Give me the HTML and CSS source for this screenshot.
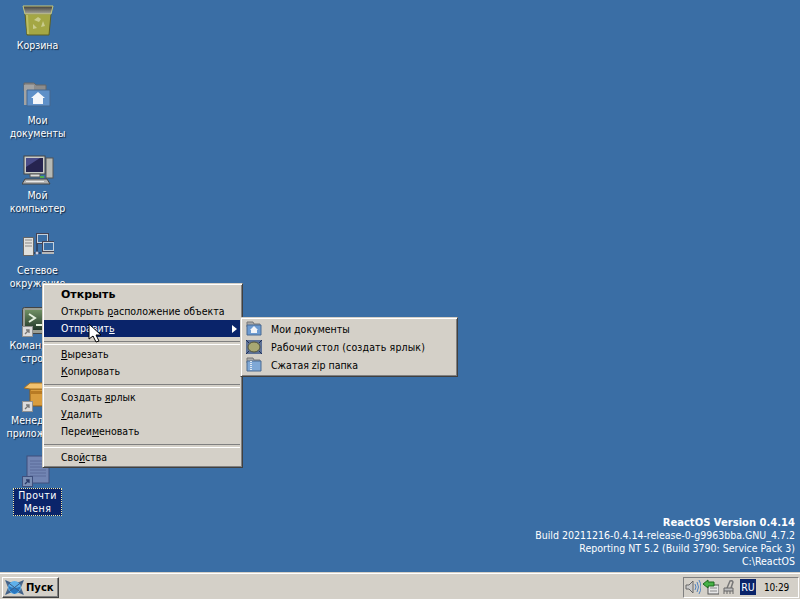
FILE: index.html
```html
<!DOCTYPE html>
<html lang="ru">
<head>
<meta charset="utf-8">
<title>ReactOS</title>
<link rel="stylesheet" href="styles.css">
</head>
<body>
<div class="screen">
  <main class="desktop">
    <div class="icons">
      <div class="dicon">
        <svg class="dicon-img" viewBox="0 0 32 32"><defs><linearGradient id="binTop" x1="0" y1="0" x2="0" y2="1"><stop offset="0" stop-color="#3d3d38"/><stop offset="1" stop-color="#a9a99c"/></linearGradient></defs><path d="M3 9h26l-2 21H5z" fill="#a4a744" stroke="#5d5f22"/><path d="M1 1h30l-2 8H3z" fill="url(#binTop)" stroke="#c6c87c"/><path d="M4 10h2l1 19H5z" fill="#bdbf66"/><path d="M12 15l4-3 3 2-2 3zM21 16l2 5-4 1zM11 19l4 4-4 1z" fill="#c9cb8c"/></svg>
        <span class="dlabel">Корзина</span>
      </div>
      <div class="dicon">
        <svg class="dicon-img" viewBox="0 0 32 32"><path d="M2 3h10l2 2h10v6H2z" fill="#8c8c8c" stroke="#666"/><path d="M2 5h10v20H2z" fill="#a3a3a3"/><path d="M5 10h23v16H5z" fill="#5f90c8" stroke="#44678f"/><path d="M16 12l7 6h-2v6h-10v-6H9z" fill="#f4f6fa"/></svg>
        <span class="dlabel">Мои документы</span>
      </div>
      <div class="dicon">
        <svg class="dicon-img" viewBox="0 0 32 32"><rect x="24" y="3" width="7" height="20" fill="#b5b9b5" stroke="#555"/><rect x="2" y="1" width="21" height="18" fill="#c7cbc7" stroke="#444"/><rect x="4" y="3" width="17" height="14" fill="#26244f"/><path d="M4 3h14L4 12z" fill="#4a4c88"/><rect x="8" y="19" width="10" height="3" fill="#dcdcdc" stroke="#555"/><rect x="18" y="21" width="4" height="2" fill="#4cae4c"/><path d="M3 24h22l3 5H0z" fill="#b0b0b0" stroke="#444"/><path d="M4 26h18v1H4z" fill="#e8e8e8"/></svg>
        <span class="dlabel">Мой компьютер</span>
      </div>
      <div class="dicon">
        <svg class="dicon-img" viewBox="0 0 32 32"><rect x="1.500" y="7.500" width="10" height="18" fill="#e0e0dc" stroke="#666"/><path d="M3 10h7M3 13h7M3 16h7" stroke="#888"/><path d="M12 23h4M15 14v9M15 23h4" stroke="#223" fill="none"/><circle cx="15" cy="23" r="1.500" fill="#ccd"/><rect x="14.500" y="3.500" width="12" height="10" fill="#c3d0dc" stroke="#445"/><rect x="16" y="5" width="9" height="7" fill="#3a6ea5"/><rect x="20.500" y="11.500" width="12" height="10" fill="#c3d0dc" stroke="#445"/><rect x="22" y="13" width="9" height="7" fill="#3a6ea5"/><rect x="20" y="22" width="13" height="2" fill="#b8b8b8"/></svg>
        <span class="dlabel">Сетевое окружение</span>
      </div>
      <div class="dicon">
        <svg class="dicon-img" viewBox="0 0 32 32"><defs><linearGradient id="con" x1="0" y1="0" x2="0" y2="1"><stop offset="0" stop-color="#6f8f63"/><stop offset="1" stop-color="#22382a"/></linearGradient></defs><rect x="0.500" y="2.500" width="31" height="26" rx="2" fill="#9a9e94" stroke="#444"/><rect x="3" y="5" width="26" height="20" fill="url(#con)"/><path d="M7 9l6 4-6 4" fill="none" stroke="#e6f2e0" stroke-width="2"/><path d="M14 20h9" stroke="#e6f2e0" stroke-width="2"/><rect x="0.500" y="21.500" width="10" height="10" fill="#dcdcdc" stroke="#909090"/><path d="M3 29l4-4M4 25h3v3" stroke="#777" stroke-width="1.300" fill="none"/></svg>
        <span class="dlabel">Командная строка</span>
      </div>
      <div class="dicon">
        <svg class="dicon-img" viewBox="0 0 32 32"><path d="M8 9h22v17H8z" fill="#d99d3e" stroke="#8a5a18"/><path d="M2 8l6-5h22l1 6H8z" fill="#f2c26f" stroke="#a8701f"/><path d="M8 11h22v3H8z" fill="#b87b24"/><rect x="0.500" y="21.500" width="10" height="10" fill="#dcdcdc" stroke="#909090"/><path d="M3 29l4-4M4 25h3v3" stroke="#777" stroke-width="1.300" fill="none"/></svg>
        <span class="dlabel">Менеджер приложений</span>
      </div>
      <div class="dicon selected">
        <svg class="dicon-img" viewBox="0 0 32 32"><rect x="5" y="1" width="22" height="27" fill="#7285b3" stroke="#3f4f7d"/><path d="M8 6h14M8 9h16M8 12h16M8 15h16M8 18h16M8 21h16" stroke="#5a6b99"/><rect x="0.500" y="21.500" width="10" height="10" fill="#7b8fb5" stroke="#3f4f7d"/><path d="M3 29l4-4M4 25h3v3" stroke="#2a3a68" stroke-width="1.300" fill="none"/></svg>
        <span class="dlabel">Прочти Меня</span>
      </div>
    </div>
    <div class="version">
      <strong>ReactOS Version 0.4.14</strong>
      <span>Build 20211216-0.4.14-release-0-g9963bba.GNU_4.7.2</span>
      <span>Reporting NT 5.2 (Build 3790: Service Pack 3)</span>
      <span>C:\ReactOS</span>
    </div>

    <div class="menu menu-main">
      <div class="item bold">Открыть</div>
      <div class="item">Открыть <u>р</u>асположение объекта</div>
      <div class="item active">Отправит<u>ь</u><i class="arrow"></i></div>
      <div class="sep"></div>
      <div class="item"><u>В</u>ырезать</div>
      <div class="item"><u>К</u>опировать</div>
      <div class="sep"></div>
      <div class="item">Создать <u>я</u>рлык</div>
      <div class="item"><u>У</u>далить</div>
      <div class="item">Переи<u>м</u>еновать</div>
      <div class="sep"></div>
      <div class="item">Сво<u>й</u>ства</div>
    </div>

    <div class="menu menu-sub">
      <div class="subitem">
        <svg class="micon" viewBox="0 0 16 16"><path d="M1 1h6l1 2h6v3H1z" fill="#aaa" stroke="#777"/><path d="M1 4h14v10H1z" fill="#6d9bd1" stroke="#4a6a92"/><path d="M8 5l4 4h-1v3H5V9H4z" fill="#f2f4f8"/></svg>
        <span>Мои документы</span>
      </div>
      <div class="subitem">
        <svg class="micon" viewBox="0 0 16 16"><rect x="0" y="1" width="16" height="14" fill="#5d7196"/><path d="M0 1l3 3M16 1l-3 3M0 15l3-3M16 15l-3-3" stroke="#1f2f55"/><ellipse cx="8" cy="8" rx="6" ry="5" fill="#a8a873" stroke="#55553a"/></svg>
        <span class="wide">Рабочий стол (создать ярлык)</span>
      </div>
      <div class="subitem">
        <svg class="micon" viewBox="0 0 16 16"><path d="M1 1h6l1 2h6v3H1z" fill="#aaa" stroke="#777"/><path d="M1 4h14v10H1z" fill="#7fa8d6" stroke="#4a6a92"/><path d="M5 4v10" stroke="#dfe8f2" stroke-width="2" stroke-dasharray="1 1"/></svg>
        <span>Сжатая zip папка</span>
      </div>
    </div>

    <svg class="cursor" viewBox="0 0 13 20"><path d="M1 1v15l4-3 3 6 3-1-3-6h5z" fill="#fff" stroke="#000"/></svg>
  </main>

  <footer class="taskbar">
    <button class="start">
      <svg class="start-logo" viewBox="0 0 19 15"><path d="M0 0l5 2h9l5-2-3 7.500 3 7.500-5-2H5l-5 2 3-7.500z" fill="#4d6a8c"/><circle cx="9.500" cy="7.500" r="6.500" fill="#5fb0ea"/><path d="M3.500 6q6 3.500 12 .5-1 5.500-6 7.500-5-2-6-8z" fill="#2a78c0"/><path d="M1 1l17 13M18 1L1 14" stroke="#3c5c85"/></svg>
      <span>Пуск</span>
    </button>
    <div class="tray">
      <svg class="ticon" viewBox="0 0 16 16"><path d="M1 6h3l4-4v12l-4-4H1z" fill="#c9c9c9" stroke="#666"/><path d="M10 5q2 3 0 6M12 3q3 5 0 10M14 1q4 7 0 14" fill="none" stroke="#4f82c0"/></svg>
      <svg class="ticon" viewBox="0 0 16 16"><rect x="5" y="6" width="11" height="9" fill="#e6e6e6" stroke="#555"/><path d="M7 9h7M7 12h7" stroke="#888"/><path d="M0 5l5-4v2h6v4H5v2z" fill="#47b247" stroke="#1d6b1d"/></svg>
      <svg class="ticon" viewBox="0 0 16 16"><path d="M6 9l3-7q2-1 3 1l-2 6" fill="none" stroke="#777" stroke-width="1.500"/><path d="M3 9h9v3H3z" fill="#c0c0c0" stroke="#666"/><path d="M3 12v3M6 12v3M9 12v3M12 12v3" stroke="#666"/></svg>
      <span class="lang">RU</span>
      <span class="clock">10:29</span>
    </div>
  </footer>
</div>
</body>
</html>
```
FILE: styles.css
```css
* { box-sizing: border-box; }
html, body { margin: 0; padding: 0; }
body {
  font-family: "DejaVu Sans Condensed", "DejaVu Sans", sans-serif;
  font-size: 10.5px;
  line-height: 13px;
  overflow: hidden;
}
.screen {
  width: 800px;
  height: 599px;
  display: flex;
  flex-direction: column;
  background: #3a6ea5;
}
.desktop {
  position: relative;
  flex: 1;
  display: flex;
  justify-content: space-between;
}
.icons { display: flex; flex-direction: column; width: 75px; }
.dicon {
  height: 75px;
  padding-top: 5px;
  display: flex;
  flex-direction: column;
  align-items: center;
}
.dicon-img { width: 32px; height: 32px; flex: none; }
.dlabel {
  margin-top: 1px;
  padding: 1px 2px;
  text-align: center;
  color: #fff;
  text-shadow: 1px 1px 1px #12233a;
  width: 66px;
}
.selected .dlabel {
  width: 49px;
  background: #0a246a;
  outline: 1px dotted #f0e8a0;
  outline-offset: -1px;
  text-shadow: none;
  padding: 1px 2px;
  letter-spacing: 0.4px;
}
.version {
  align-self: flex-end;
  display: flex;
  flex-direction: column;
  align-items: flex-end;
  padding: 0 5px 4px 0;
  color: #fff;
}
.version strong {
  font-family: "DejaVu Sans", sans-serif;
  font-size: 10px;
  font-weight: 700;
}

.menu {
  position: absolute;
  background: #d4d0c8;
  color: #000;
  border: 1px solid;
  border-color: #d4d0c8 #404040 #404040 #d4d0c8;
  box-shadow: inset 1px 1px #fff, inset -1px -1px #808080;
}
.menu-main {
  left: 42px;
  top: 283px;
  width: 201px;
  padding: 2px 2px 1px 1px;
}
.menu-sub {
  left: 240px;
  top: 317px;
  width: 218px;
  padding: 2px 3px 2px 3px;
}
.item {
  position: relative;
  height: 17px;
  line-height: 17px;
  padding-left: 17px;
}
.bold {
  font-family: "DejaVu Sans", sans-serif;
  font-size: 11px;
  font-weight: 700;
}
.active { background: #0a246a; color: #fff; }
.arrow {
  position: absolute;
  right: 3px;
  top: 5px;
  border-left: 5px solid #fff;
  border-top: 4px solid transparent;
  border-bottom: 4px solid transparent;
}
.sep {
  height: 9px;
  padding-top: 4px;
}
.sep::before {
  content: "";
  display: block;
  height: 2px;
  border-top: 1px solid #808080;
  border-bottom: 1px solid #fff;
}
.subitem {
  height: 18px;
  display: flex;
  align-items: center;
  gap: 9px;
  padding-left: 2px;
}
.wide { letter-spacing: 0.14px; }
.micon { width: 16px; height: 16px; flex: none; }
.cursor {
  position: absolute;
  left: 88px;
  top: 323px;
  width: 13px;
  height: 20px;
}
.taskbar {
  flex: none;
  height: 27px;
  display: flex;
  justify-content: space-between;
  align-items: center;
  padding: 2px 1px 0 2px;
  background: #d4d0c8;
  border-top: 1px solid #d4d0c8;
  box-shadow: inset 0 1px #fff;
}
.start {
  font: inherit;
  height: 21px;
  width: 57px;
  display: flex;
  align-items: center;
  gap: 2px;
  padding: 0 0 0 2px;
  background: #d4d0c8;
  color: #000;
  font-family: "DejaVu Sans", sans-serif;
  font-weight: 700;
  font-size: 10px;
  border: 1px solid;
  border-color: #fff #404040 #404040 #fff;
  box-shadow: inset -1px -1px #808080;
}
.start-logo { width: 19px; height: 15px; flex: none; }
.tray {
  height: 21px;
  width: 116px;
  display: flex;
  align-items: center;
  gap: 2px;
  padding-left: 1px;
  border: 1px solid;
  border-color: #808080 #fff #fff #808080;
}
.ticon { width: 16px; height: 16px; flex: none; }
.lang {
  width: 16px;
  height: 16px;
  margin-left: 1px;
  line-height: 16px;
  text-align: center;
  background: #0a246a;
  color: #fff;
}
.clock { margin-left: 6px; color: #000; font-size: 10px; letter-spacing: -0.2px; }
```
